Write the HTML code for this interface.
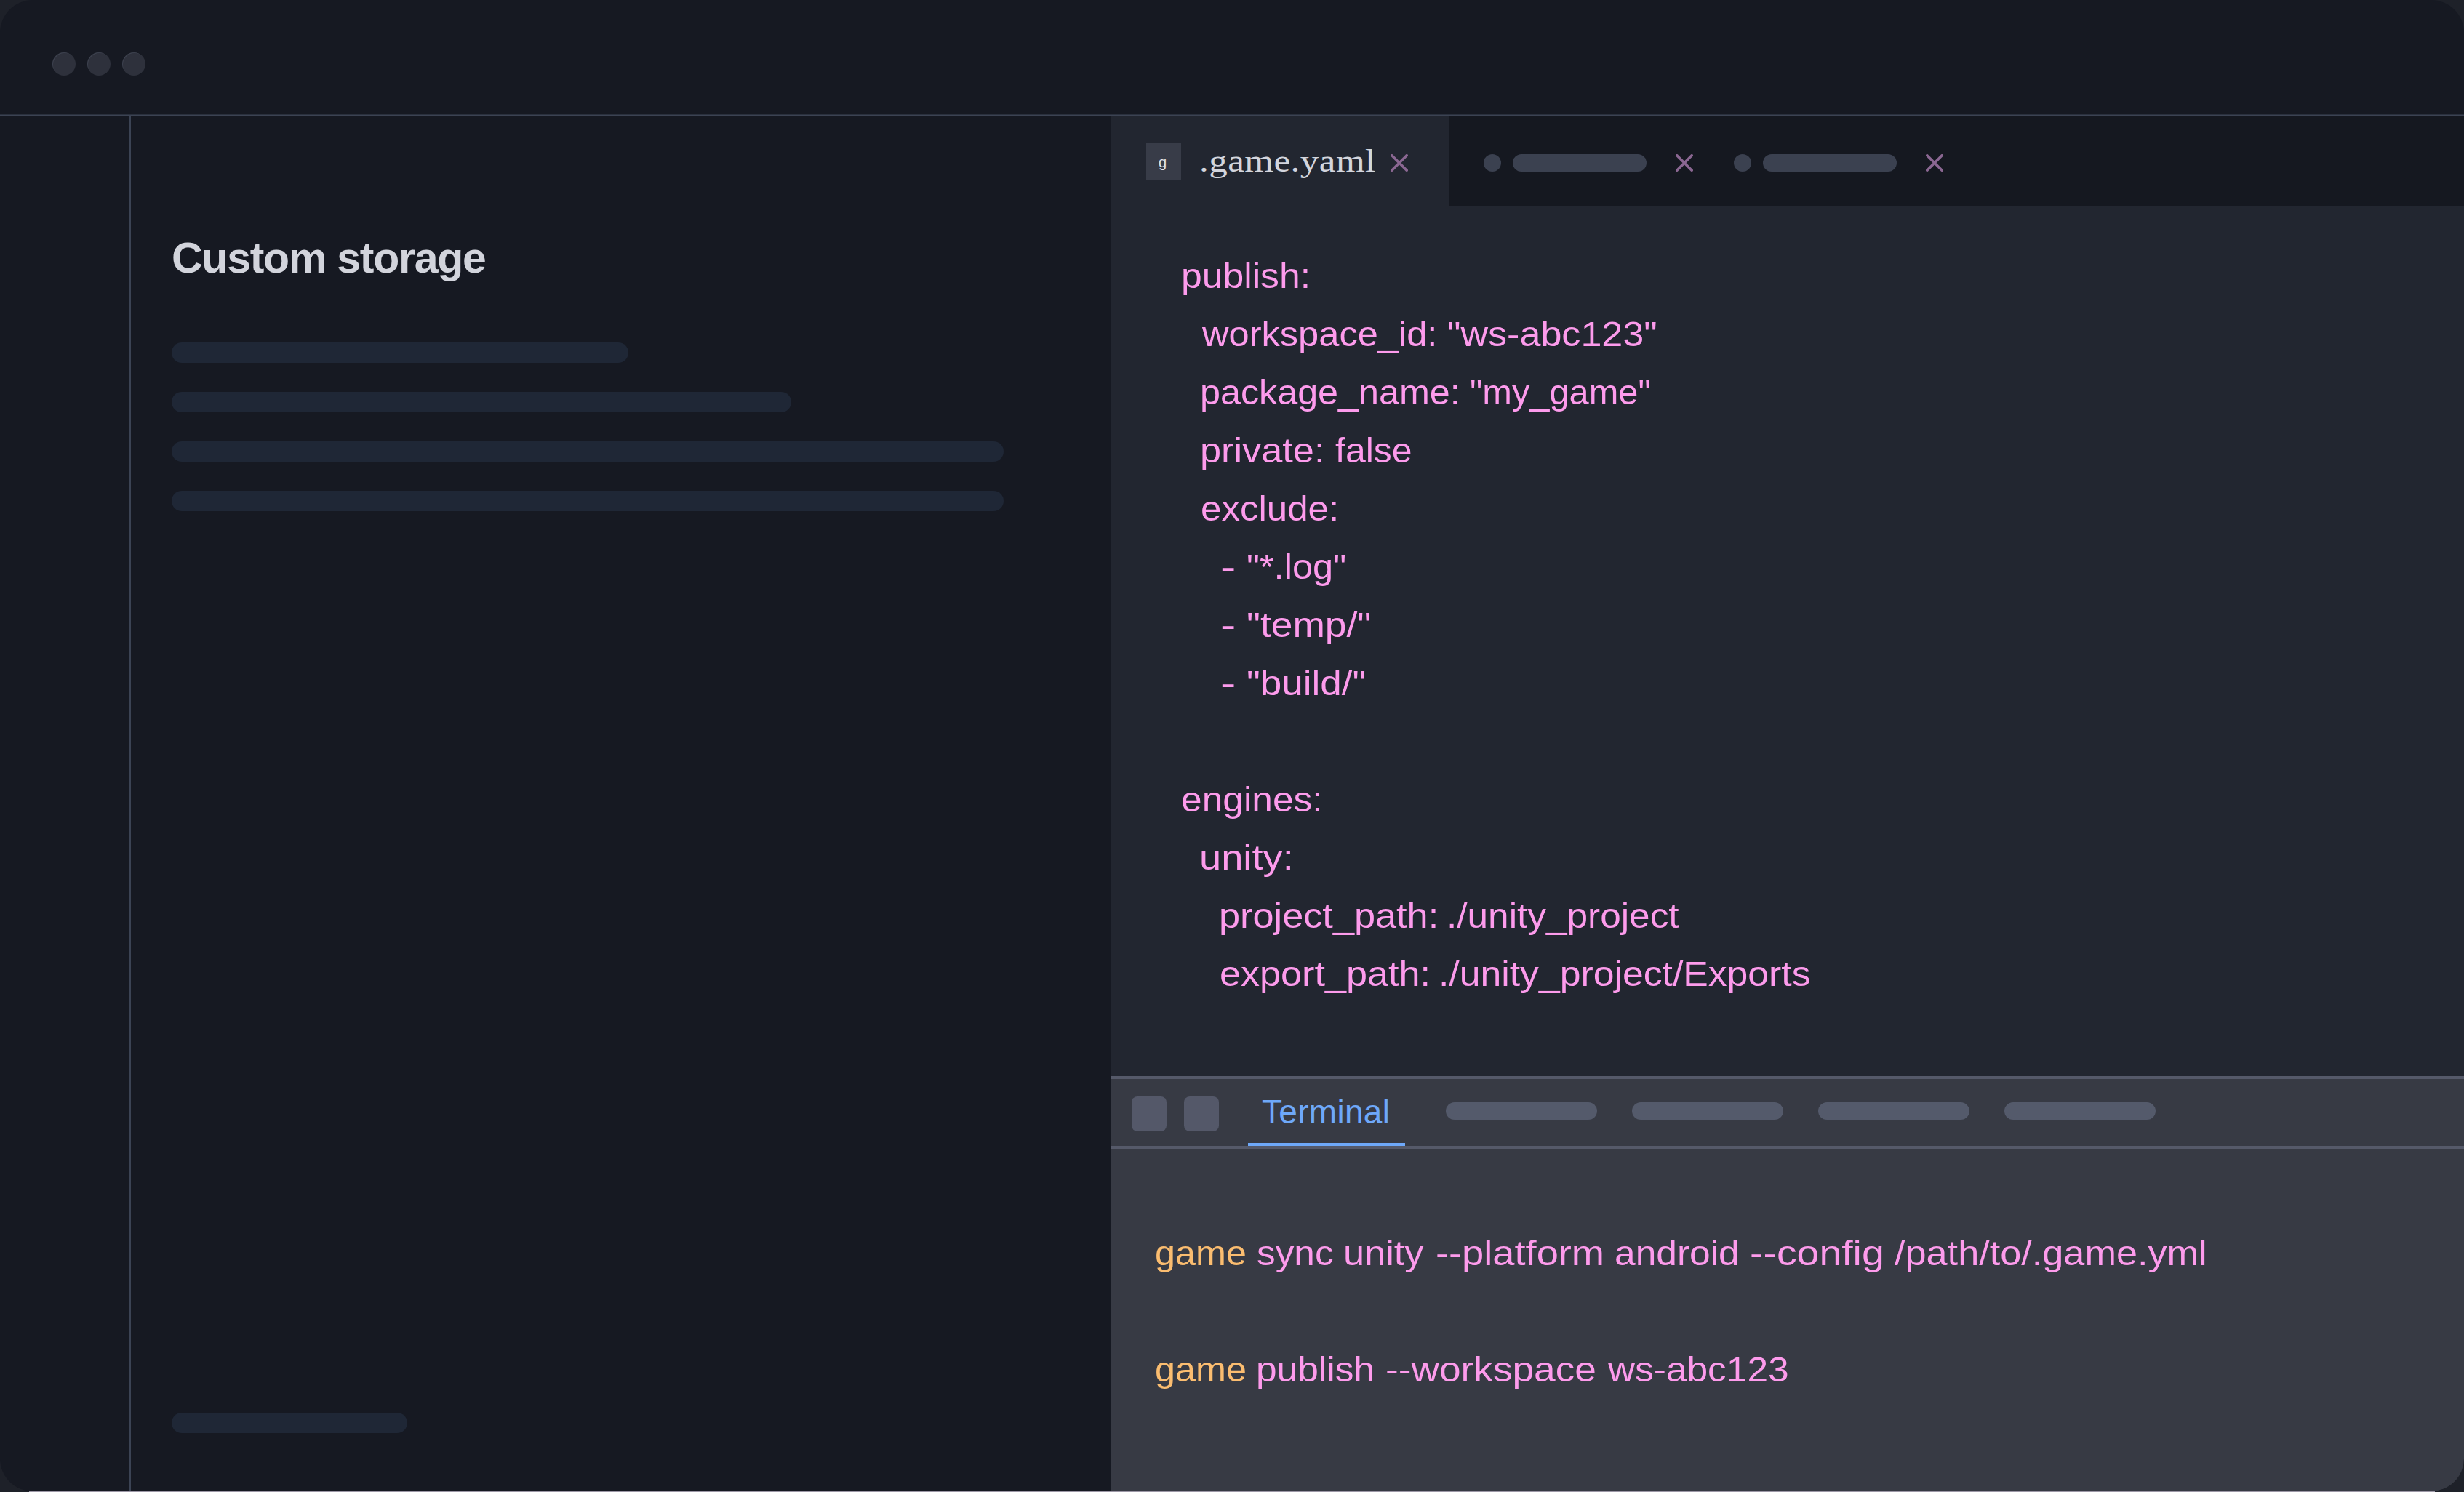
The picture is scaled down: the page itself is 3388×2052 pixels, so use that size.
<!DOCTYPE html>
<html>
<head>
<meta charset="utf-8">
<style>
html,body{margin:0;padding:0;}
body{width:3388px;height:2052px;background:#1e2129;position:relative;overflow:hidden;font-family:"Liberation Sans",sans-serif;}
div{position:absolute;}
#win{left:0;top:0;width:3388px;height:2051px;border-radius:45px;background:#161922;overflow:hidden;}
#bline{left:40px;top:2051px;width:3308px;height:1px;background:#9c97a6;}
.dot{width:32px;height:32px;border-radius:50%;background:#2e313c;top:72px;box-shadow:inset 1px 1px 0 rgba(72,78,92,0.55);}
#hline{left:0;top:157px;width:3388px;height:3px;background:linear-gradient(#2a303d 0,#2a303d 33%,#3c4353 33%,#3c4353 67%,#2a303d 67%);}
#vline{left:178px;top:159px;width:2px;height:1892px;background:#3b4354;}
#title{left:236px;top:320px;font-size:59px;font-weight:bold;color:#d2d4dc;white-space:nowrap;line-height:70px;letter-spacing:-1.25px;}
.lbar{left:236px;height:28px;border-radius:14px;background:#1f2736;}
#editor{left:1528px;top:159px;width:1860px;height:1321px;background:#222630;}
#tabsdark{left:1992px;top:159px;width:1396px;height:125px;background:#151820;}
#ficon{left:1576px;top:196px;width:45px;padding-right:3px;height:52px;background:#383c48;color:#e2e3ea;font-size:20px;text-align:center;line-height:55px;}
#fname{left:1649px;top:194px;font-family:"Liberation Serif",serif;font-size:44px;letter-spacing:0.4px;transform:scaleX(1.16);transform-origin:0 0;color:#d3d5dd;white-space:nowrap;line-height:56px;}
svg{position:absolute;}
.xic{width:24px;height:24px;top:212px;}
.tdot{width:24px;height:24px;border-radius:12px;background:#3b4150;top:212px;}
.tbar{width:184px;height:24px;border-radius:12px;background:#3b4150;top:212px;}
.cl{font-size:48px;color:#fd9bec;white-space:pre;line-height:56px;transform-origin:0 0;}
#term{left:1528px;top:1480px;width:1860px;height:571px;background:#373a44;}
#ttop{left:1528px;top:1480px;width:1860px;height:4px;background:#555969;}
#tbot{left:1528px;top:1576px;width:1860px;height:4px;background:#555969;}
.sq{top:1508px;width:48px;height:48px;border-radius:8px;background:#545869;}
#tterm{left:1735px;top:1501px;font-size:46px;letter-spacing:0.3px;color:#6ea8f9;line-height:56px;white-space:nowrap;}
#tul{left:1716px;top:1572px;width:216px;height:4px;background:#6ea8f9;}
.gbar{top:1516px;width:208px;height:24px;border-radius:12px;background:#545a6b;}
.cl.o{color:#fbbd70;}
</style>
</head>
<body>
<div id="win">
  <div class="dot" style="left:72px"></div>
  <div class="dot" style="left:120px"></div>
  <div class="dot" style="left:168px"></div>
  <div id="hline"></div>
  <div id="vline"></div>
  <div id="title">Custom storage</div>
  <div class="lbar" style="top:471px;width:628px"></div>
  <div class="lbar" style="top:539px;width:852px"></div>
  <div class="lbar" style="top:607px;width:1144px"></div>
  <div class="lbar" style="top:675px;width:1144px"></div>
  <div class="lbar" style="top:1943px;width:324px"></div>

  <div id="editor"></div>
  <div id="tabsdark"></div>
  <div id="ficon">g</div>
  <div id="fname">.game.yaml</div>
  <svg class="xic" style="left:1912px" viewBox="0 0 24 24"><path d="M1.8 1.8L22.2 22.2M22.2 1.8L1.8 22.2" stroke="#8b6792" stroke-width="3.6" stroke-linecap="round"/></svg>
  <div class="tdot" style="left:2040px"></div>
  <div class="tbar" style="left:2080px"></div>
  <svg class="xic" style="left:2304px" viewBox="0 0 24 24"><path d="M1.8 1.8L22.2 22.2M22.2 1.8L1.8 22.2" stroke="#8b6792" stroke-width="3.6" stroke-linecap="round"/></svg>
  <div class="tdot" style="left:2384px"></div>
  <div class="tbar" style="left:2424px"></div>
  <svg class="xic" style="left:2648px" viewBox="0 0 24 24"><path d="M1.8 1.8L22.2 22.2M22.2 1.8L1.8 22.2" stroke="#8b6792" stroke-width="3.6" stroke-linecap="round"/></svg>

<div class="cl p" style="left:1623.77px;top:352px;transform:scaleX(1.0759)">publish:</div>
<div class="cl p" style="left:1653.00px;top:432px;transform:scaleX(1.0541)">workspace_id:</div>
<div class="cl p" style="left:1989.83px;top:432px;transform:scaleX(1.0847)">&quot;ws-abc123&quot;</div>
<div class="cl p" style="left:1650.26px;top:512px;transform:scaleX(1.0473)">package_name:</div>
<div class="cl p" style="left:2020.77px;top:512px;transform:scaleX(1.0158)">&quot;my_game&quot;</div>
<div class="cl p" style="left:1650.13px;top:592px;transform:scaleX(1.0893)">private:</div>
<div class="cl p" style="left:1835.86px;top:592px;transform:scaleX(1.0414)">false</div>
<div class="cl p" style="left:1650.87px;top:672px;transform:scaleX(1.0636)">exclude:</div>
<div class="cl p" style="left:1678.33px;top:752px;transform:scaleX(1.3333)">-</div>
<div class="cl p" style="left:1714.19px;top:752px;transform:scaleX(1.0532)">&quot;*.log&quot;</div>
<div class="cl p" style="left:1678.33px;top:832px;transform:scaleX(1.3333)">-</div>
<div class="cl p" style="left:1714.08px;top:832px;transform:scaleX(1.1113)">&quot;temp/&quot;</div>
<div class="cl p" style="left:1678.33px;top:912px;transform:scaleX(1.3333)">-</div>
<div class="cl p" style="left:1714.09px;top:912px;transform:scaleX(1.1048)">&quot;build/&quot;</div>
<div class="cl p" style="left:1623.55px;top:1072px;transform:scaleX(1.0726)">engines:</div>
<div class="cl p" style="left:1649.01px;top:1152px;transform:scaleX(1.1306)">unity:</div>
<div class="cl p" style="left:1675.73px;top:1232px;transform:scaleX(1.0889)">project_path:</div>
<div class="cl p" style="left:1988.72px;top:1232px;transform:scaleX(1.0695)">./unity_project</div>
<div class="cl p" style="left:1676.83px;top:1312px;transform:scaleX(1.0862)">export_path:</div>
<div class="cl p" style="left:1978.39px;top:1312px;transform:scaleX(1.0772)">./unity_project/Exports</div>

  <div id="term"></div>
  <div id="ttop"></div>
  <div id="tbot"></div>
  <div class="sq" style="left:1556px"></div>
  <div class="sq" style="left:1628px"></div>
  <div id="tterm">Terminal</div>
  <div id="tul"></div>
  <div class="gbar" style="left:1988px"></div>
  <div class="gbar" style="left:2244px"></div>
  <div class="gbar" style="left:2500px"></div>
  <div class="gbar" style="left:2756px"></div>
<div class="cl o" style="left:1587.90px;top:1696px;transform:scaleX(1.0483)">game</div>
<div class="cl p" style="left:1727.66px;top:1696px;transform:scaleX(1.0698)">sync</div>
<div class="cl p" style="left:1847.43px;top:1696px;transform:scaleX(1.0898)">unity</div>
<div class="cl p" style="left:1973.54px;top:1696px;transform:scaleX(1.1299)">--platform</div>
<div class="cl p" style="left:2219.76px;top:1696px;transform:scaleX(1.0723)">android</div>
<div class="cl p" style="left:2405.89px;top:1696px;transform:scaleX(1.1542)">--config</div>
<div class="cl p" style="left:2605.40px;top:1696px;transform:scaleX(1.0883)">/path/to/.game.yml</div>
<div class="cl o" style="left:1587.90px;top:1856px;transform:scaleX(1.0483)">game</div>
<div class="cl p" style="left:1727.39px;top:1856px;transform:scaleX(1.0712)">publish</div>
<div class="cl p" style="left:1904.88px;top:1856px;transform:scaleX(1.1093)">--workspace</div>
<div class="cl p" style="left:2211.20px;top:1856px;transform:scaleX(1.0709)">ws-abc123</div>
</div>
<div id="bline"></div>
</body>
</html>
